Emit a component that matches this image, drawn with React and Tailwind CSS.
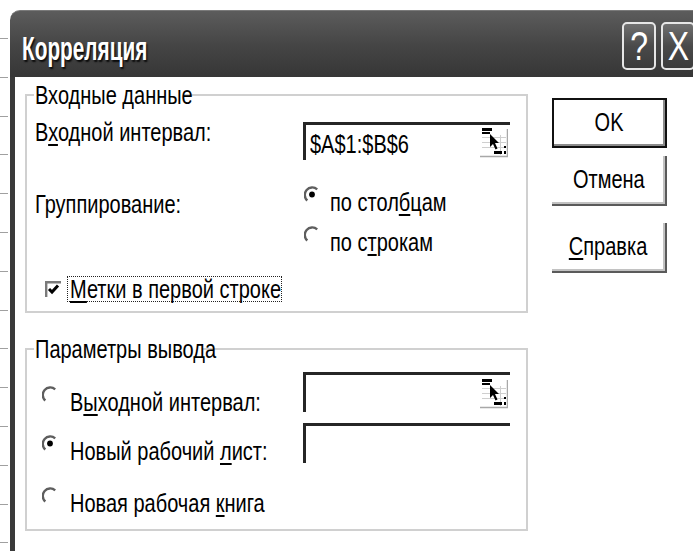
import React from 'react';

const FONT = "font-['Liberation_Sans',Arial,sans-serif]";

const T = ({ children, className = 'origin-left' }) => (
  <span className={`inline-block whitespace-nowrap scale-x-[0.8] ${className}`}>{children}</span>
);

// Underlined access-key letter
const Key = ({ children }) => <span className="underline underline-offset-[3px] decoration-[1.5px]">{children}</span>;

const Radio = ({ checked, className = '' }) => (
  <svg width="16" height="17" viewBox="0 0 16 17" className={`shrink-0 ${className}`}>
    <path d="M3.3 14.5 A7 7 0 0 1 13.2 3.3" fill="none" stroke="#5e5e5e" strokeWidth="2.4" />
    {checked && <circle cx="8" cy="8.5" r="2.9" fill="#000" />}
  </svg>
);

const CheckBox = () => (
  <svg width="16" height="16" viewBox="0 0 16 16" className="shrink-0">
    <path d="M1.2 16 V1.2 H16" fill="none" stroke="#7a7a7a" strokeWidth="2.4" />
    <path d="M4 8 L7 11 L13 4.5" fill="none" stroke="#000" strokeWidth="3" />
  </svg>
);

// Collapse-dialog button of the reference edit fields
const RangePicker = () => (
  <svg width="28" height="31" viewBox="0 0 28 31" className="shrink-0 mr-[2px]">
    <g stroke="#cfcfcf" strokeWidth="1">
      <line x1="2" y1="10.5" x2="26" y2="10.5" />
      <line x1="2" y1="15.5" x2="26" y2="15.5" />
      <line x1="2" y1="20.5" x2="26" y2="20.5" />
      <line x1="20.5" y1="8" x2="20.5" y2="28" />
    </g>
    <rect x="2" y="1" width="10" height="3" fill="#000" />
    <rect x="2" y="5" width="8" height="2" fill="#000" />
    <path d="M10 7 L10 20 L13 17 L15.5 22.5 L17.5 21.5 L15 16 L19 16 Z" fill="#000" />
    <rect x="14" y="24" width="8" height="3" fill="#000" />
    <rect x="24" y="19" width="2" height="2" fill="#000" />
    <rect x="24" y="24" width="2" height="3" fill="#000" />
    <path d="M0 29.5 H27.5 V2" fill="none" stroke="#a8a8a8" strokeWidth="1.5" />
  </svg>
);

const Field = ({ value, picker, h }) => (
  <div className={`w-[207px] ${h} shrink-0 border-t-[3px] border-l-[3px] border-[#262626] flex items-center justify-between pl-[4px]`}>
    <T className="origin-left leading-[26px] pt-[3px]">{value}</T>
    {picker && <RangePicker />}
  </div>
);

const TitleButton = ({ children }) => (
  <div className="w-[34px] h-[48px] rounded-[5px] border-2 border-[#e6e6e6] bg-gradient-to-b from-[#707070] via-[#4a4a4a] to-[#3c3c3c] flex items-center justify-center text-white text-[40px] leading-none">
    <T className="origin-center">{children}</T>
  </div>
);

const Button = ({ children, primary, className = '' }) => (
  <div
    className={`h-[50px] flex items-center justify-center ${
      primary
        ? 'border-2 border-[#111] shadow-[inset_-2px_-2px_0_#8c8c8c]'
        : 'border-r-2 border-b-2 border-[#5a5a5a] shadow-[inset_-2px_-2px_0_#c2c2c2]'
    } ${className}`}
  >
    <T className="origin-center">{children}</T>
  </div>
);

export default function App() {
  return (
    <div className={`w-[693px] h-[551px] overflow-hidden bg-white flex text-[25px] text-black ${FONT}`}>
      {/* ruler ticks along the left edge */}
      <div className="w-[10px] shrink-0 flex flex-col pt-[38px] gap-[37.8px]">
        {Array.from({ length: 14 }).map((_, i) => (
          <div key={i} className="h-px w-[8px] bg-[#a0a0a0]" />
        ))}
      </div>

      <div className="w-[690px] shrink-0 mt-[10px] flex flex-col">
        {/* title bar */}
        <div className="h-[67px] shrink-0 rounded-tl-[10px] border-t border-[#7a7a7a] bg-gradient-to-b from-[#5c5c5c] via-[#464646] to-[#363636] flex items-start justify-between">
          <span className="mt-[21px] ml-[12px] text-[33px] leading-[33px] font-bold text-white whitespace-nowrap scale-x-[0.63] origin-left [text-shadow:2px_2px_2px_rgba(0,0,0,0.85)]">
            Корреляция
          </span>
          <div className="flex gap-[5px] mt-[11px] mr-[5px]">
            <TitleButton>?</TitleButton>
            <TitleButton>X</TitleButton>
          </div>
        </div>

        {/* dialog body */}
        <div className="flex-1 flex bg-white border-l-[5px] border-[#3a3a3a]">
          <div className="ml-[10px] w-[503px] shrink-0 flex flex-col">
            <fieldset className="mt-[5px] border-2 border-[#d0d0d0] px-[7px] pb-[9px]">
              <legend className="px-[1px] leading-[26px] w-[150px]">
                <T>Входные данные</T>
              </legend>
              <div className="mt-[14px] h-[38px] flex items-start">
                <span className="w-[269px] -mt-[3px] pl-px leading-[26px]">
                  <T>
                    В<Key>х</Key>одной интервал:
                  </T>
                </span>
                <Field value="$A$1:$B$6" picker h="h-[38px]" />
              </div>
              <div className="mt-[29px] flex items-start">
                <span className="w-[269px] mt-[2px] pl-px leading-[26px]">
                  <T>Группирование:</T>
                </span>
                <div className="flex flex-col">
                  <div className="flex items-start leading-[26px]">
                    <Radio checked className="ml-[1px] -mt-[3px]" />
                    <span className="ml-[10px]">
                      <T>
                        по стол<Key>б</Key>цам
                      </T>
                    </span>
                  </div>
                  <div className="mt-[14px] flex items-start leading-[26px]">
                    <Radio className="ml-[1px] -mt-[3px]" />
                    <span className="ml-[10px]">
                      <T>
                        по с<Key>т</Key>рокам
                      </T>
                    </span>
                  </div>
                </div>
              </div>
              <div className="mt-[21px] flex items-center">
                <div className="ml-[11px]">
                  <CheckBox />
                </div>
                <span className="ml-[6px] w-[215px] border border-dotted border-[#222] pl-[2px] leading-[24px]">
                  <T>
                    <Key>М</Key>етки в первой строке
                  </T>
                </span>
              </div>
            </fieldset>

            <fieldset className="mt-[23px] border-2 border-[#d0d0d0] px-[7px] pb-[13px]">
              <legend className="px-[1px] leading-[26px] w-[168px]">
                <T>Параметры вывода</T>
              </legend>
              <div className="mt-[10px] h-[40px] flex items-start">
                <div className="w-[269px] mt-[17px] flex items-start leading-[26px]">
                  <Radio className="ml-[8px] -mt-[3px]" />
                  <span className="ml-[12px]">
                    <T>
                      В<Key>ы</Key>ходной интервал:
                    </T>
                  </span>
                </div>
                <Field value="" picker h="h-[40px]" />
              </div>
              <div className="mt-[11px] h-[40px] flex items-start">
                <div className="w-[269px] mt-[15px] flex items-start leading-[26px]">
                  <Radio checked className="ml-[8px] -mt-[3px]" />
                  <span className="ml-[12px]">
                    <T>
                      Новый рабочий <Key>л</Key>ист:
                    </T>
                  </span>
                </div>
                <Field value="" h="h-[40px]" />
              </div>
              <div className="mt-[27px] flex items-start leading-[26px]">
                <Radio className="ml-[8px] -mt-[3px]" />
                <span className="ml-[12px]">
                  <T>
                    Новая рабочая <Key>к</Key>нига
                  </T>
                </span>
              </div>
            </fieldset>
          </div>

          {/* command buttons */}
          <div className="ml-[24px] mt-[21px] w-[115px] shrink-0 flex flex-col">
            <Button primary className="h-[49px]">OK</Button>
            <Button className="mt-[8px]">Отмена</Button>
            <Button className="mt-[17px]">
              <Key>С</Key>правка
            </Button>
          </div>
        </div>
      </div>
    </div>
  );
}
